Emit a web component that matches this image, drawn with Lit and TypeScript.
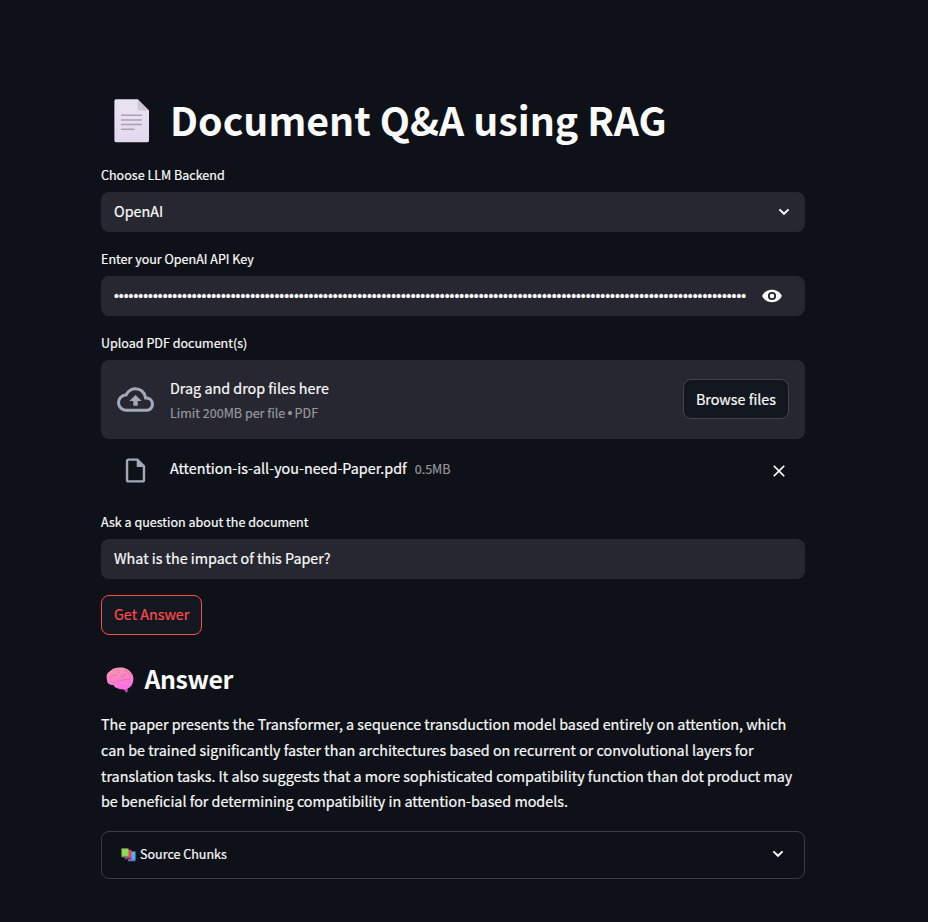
import { LitElement, html, css } from "lit";
import { customElement } from "lit/decorators.js";

const chevron = html`<svg class="chevron" viewBox="0 0 12 8"><path d="M1.400 1.400 6 5.800l4.600-4.400" /></svg>`;

const pageEmoji = html`<svg class="page-emoji" viewBox="0 0 36 44">
  <defs>
    <linearGradient id="sheet" x1="0" y1="0" x2="0" y2="1">
      <stop offset="0" stop-color="#ebe3f2" /><stop offset="1" stop-color="#e3d8ee" />
    </linearGradient>
    <linearGradient id="fold" x1="0" y1="1" x2="1" y2="0">
      <stop offset="0" stop-color="#d3ccd8" /><stop offset="1" stop-color="#bdb6c4" />
    </linearGradient>
  </defs>
  <path fill="url(#sheet)" d="M2 .2h21.800L35 11.400v30.200a1.600 1.600 0 0 1-1.600 1.600H2A1.600 1.600 0 0 1 .4 41.600V1.800A1.600 1.600 0 0 1 2 .2Z" />
  <path fill="url(#fold)" d="M23.600.2 35 11.600H25.200a1.600 1.600 0 0 1-1.600-1.600Z" />
  <path stroke="#a9a1b1" stroke-width="1.500" stroke-linecap="round" d="M7.500 16.200h20M7.500 20.900h20M7.500 25.500h20M7.500 30.200h12.500" />
</svg>`;

const brainEmoji = html`<svg class="brain-emoji" viewBox="0 0 28 26">
  <defs>
    <linearGradient id="brain" x1="0" y1="0" x2=".2" y2="1">
      <stop offset="0" stop-color="#f59ab0" /><stop offset=".55" stop-color="#fb85c6" /><stop offset="1" stop-color="#ff6fe6" />
    </linearGradient>
  </defs>
  <path fill="#dd48bd" d="M16 20h6l-.6 5.200-1.600.3c-.5-2-1.800-3.100-3.800-3.500Z" />
  <path fill="url(#brain)" d="M13.500.5c5.500-.6 9.500 2 11.500 5 2.500 2.500 2.800 6.500 2 9-.4 4-3.500 7-7.500 7.500-3 .6-6 .2-8-.7-2.500-.6-3.500-2-4-3.300C3 18 1 16 1 13-.2 9 1 5.500 4.500 3.800 6.500 1.500 10 .5 13.500.5Z" />
  <g fill="none" stroke="#dc6197" stroke-width=".8" stroke-linecap="round" opacity=".75">
    <path d="M4 11c1.500-3 4.500-3.500 7-2.500M9 2.800c2.500-.3 4 1 4.500 3M7 16c3-.3 4-2.500 7-2.500s5-2 9-1M15 9.500c2 .5 4-1 4.500-3M18 3c3 .5 5 2.500 5.500 5" />
  </g>
</svg>`;

const booksEmoji = html`<svg class="books-emoji" viewBox="0 0 15 14">
  <path fill="#4db5ea" d="M7 3.500h7.500V12H8Z" /><path fill="#4a78c4" d="M7 11.500h7.500v1.800H7Z" />
  <path fill="#ef3d69" d="M4 1.800h6.500v8.400H4Z" /><path fill="#a3255f" d="M3.500 9.700h7v1.700h-7Z" />
  <path fill="#8fd858" d="M.5.400h7v8h-7Z" /><path fill="#4e9c7a" d="M.5 7.900h7v1.500h-7Z" />
</svg>`;

@customElement("app-root")
export class AppRoot extends LitElement {
  static styles = css`
    :host {
      display: block;
      box-sizing: border-box;
      min-height: 922px;
      padding: 94px 123px 43px 101px;
      background: #0e1117;
      color: #fafafa;
      font: 14.33px/25.6px "Noto Sans CJK SC", "Noto Sans", sans-serif;
      -webkit-text-stroke: 0.2px currentColor;
    }
    * { box-sizing: border-box; }
    svg { display: block; flex: none; }
    h1, h2, p { margin: 0; }
    h1, h2 { -webkit-text-stroke: 0; }
    h1 {
      display: flex;
      align-items: center;
      height: 53px;
      padding-left: 12.5px;
      gap: 20.5px;
      font-size: 39.3px;
      line-height: 53px;
      font-weight: 700;
      white-space: nowrap;
    }
    h1 span { padding-bottom: 5px; }
    .page-emoji { width: 36px; height: 44px; }
    .label { display: block; font-size: 12.54px; line-height: 20px; margin: 0 0 7px; }
    .first { margin-top: 18px; }
    .next { margin-top: 17px; }
    .box {
      display: flex;
      align-items: center;
      height: 40px;
      padding: 0 15px 0 13px;
      border-radius: 8px;
      background: #262730;
    }
    .grow { flex: 1; }
    .text { padding-bottom: 2px; }
    .chevron { width: 12px; height: 8px; fill: none; stroke: #fafafa; stroke-width: 2; }
    .dots {
      flex: 1;
      padding-top: 2px;
      font-family: "Liberation Sans", sans-serif;
      font-size: 13.9px;
      white-space: nowrap;
    }
    .eye { width: 20px; height: 14px; margin-right: 8px; }
    .drop {
      display: flex;
      align-items: center;
      height: 79px;
      padding: 0 16px;
      border-radius: 8px;
      background: #262730;
    }
    .cloud { width: 37px; height: 37px; fill: #a3a8b8; margin-right: 16px; }
    .small { font-size: 12.54px; line-height: 20px; color: #96979b; }
    .hint { display: flex; gap: 2.2px; margin-bottom: 1px; }
    .hint i { font: 14px/20px "Liberation Sans", sans-serif; }
    .button {
      height: 40px;
      padding: 0 12px 2px;
      border: 1px solid #41444c;
      border-radius: 8px;
      background: #131720;
      color: #fafafa;
      font: inherit;
      white-space: nowrap;
    }
    .browse { margin-bottom: 1px; padding-bottom: 1px; }
    .danger { display: block; margin-top: 16px; border-color: #ff4b4b; color: #ff4b4b; }
    .file { display: flex; align-items: center; height: 40px; margin-top: 11px; padding: 0 16px 0 20px; }
    .doc { width: 29px; height: 29px; fill: #a3a8b8; margin-right: 20px; }
    .name { padding-bottom: 4.500px; }
    .size { flex: 1; margin-left: 8px; padding-bottom: 2px; }
    .close { width: 20px; height: 20px; margin-top: 2px; fill: #fafafa; }
    .question { margin-top: 22px; }
    h2 {
      display: flex;
      align-items: center;
      gap: 10.5px;
      height: 34px;
      margin-top: 28px;
      padding-left: 5px;
      font-size: 24.9px;
      font-weight: 600;
      letter-spacing: -0.4px;
    }
    h2 span { padding-bottom: 2px; }
    .brain-emoji { width: 28px; height: 26px; }
    .answer { margin-top: 14.450px; white-space: nowrap; }
    .expander {
      display: flex;
      align-items: center;
      height: 48px;
      margin-top: 17.150px;
      padding: 0 20px 0 19px;
      border: 1px solid #3b3d44;
      border-radius: 8px;
      font-size: 12.54px;
    }
    .expander .text { padding-bottom: 3px; }
    .expander .chevron { margin-bottom: 1px; }
    .books-emoji { width: 15px; height: 14px; margin-right: 4px; }
  `;

  render() {
    return html`
      <h1>${pageEmoji}<span>Document Q&amp;A using RAG</span></h1>
      <label class="label first">Choose LLM Backend</label>
      <div class="box"><span class="grow text">OpenAI</span>${chevron}</div>
      <label class="label next">Enter your OpenAI API Key</label>
      <div class="box">
        <span class="dots">${"•".repeat(130)}</span>
        <svg class="eye" viewBox="0 0 20 14">
          <path fill="#fafafa" d="M10 .8C5.500.8 1.700 3.300.1 7c1.600 3.700 5.400 6.200 9.900 6.200s8.300-2.500 9.900-6.200C18.300 3.300 14.500.8 10 .8Z" />
          <circle cx="10" cy="7" r="3.200" fill="#fafafa" stroke="#262730" stroke-width="1.800" />
        </svg>
      </div>
      <label class="label next">Upload PDF document(s)</label>
      <div class="drop">
        <svg class="cloud" viewBox="0 0 24 24"><path d="M19.350 10.040A7.490 7.490 0 0 0 12 4C9.110 4 6.600 5.640 5.350 8.040A5.994 5.994 0 0 0 0 14c0 3.310 2.690 6 6 6h13c2.760 0 5-2.240 5-5 0-2.640-2.050-4.780-4.650-4.960zM19 18H6c-2.210 0-4-1.790-4-4 0-2.050 1.530-3.760 3.560-3.970l1.070-.11.5-.95A5.469 5.469 0 0 1 12 6c2.620 0 4.880 1.860 5.390 4.430l.3 1.500 1.530.11A2.980 2.980 0 0 1 22 15c0 1.650-1.350 3-3 3zM8 13h2.550v3h2.900v-3H16l-4-4z" /></svg>
        <div class="grow">
          <div class="text">Drag and drop files here</div>
          <div class="small hint"><span>Limit 200MB per file</span><i>•</i><span>PDF</span></div>
        </div>
        <button class="button browse">Browse files</button>
      </div>
      <div class="file">
        <svg class="doc" viewBox="0 0 24 24"><path d="M14 2H6c-1.100 0-1.990.9-1.990 2L4 20c0 1.100.89 2 1.990 2H18c1.100 0 2-.9 2-2V8l-6-6zM6 20V4h7v5h5v11H6z" /></svg>
        <span class="name">Attention-is-all-you-need-Paper.pdf</span><span class="small size">0.5MB</span>
        <svg class="close" viewBox="0 0 24 24"><path d="M19 6.410 17.590 5 12 10.590 6.410 5 5 6.410 10.590 12 5 17.590 6.410 19 12 13.410 17.590 19 19 17.590 13.410 12z" /></svg>
      </div>
      <label class="label question">Ask a question about the document</label>
      <div class="box"><span class="text">What is the impact of this Paper?</span></div>
      <button class="button danger">Get Answer</button>
      <h2>${brainEmoji}<span>Answer</span></h2>
      <p class="answer">
        The paper presents the Transformer, a sequence transduction model based entirely on attention, which<br />can
        be trained significantly faster than architectures based on recurrent or convolutional layers for<br />translation
        tasks. It also suggests that a more sophisticated compatibility function than dot product may<br />be
        beneficial for determining compatibility in attention-based models.
      </p>
      <div class="expander">${booksEmoji}<span class="grow text">Source Chunks</span>${chevron}</div>
    `;
  }
}
